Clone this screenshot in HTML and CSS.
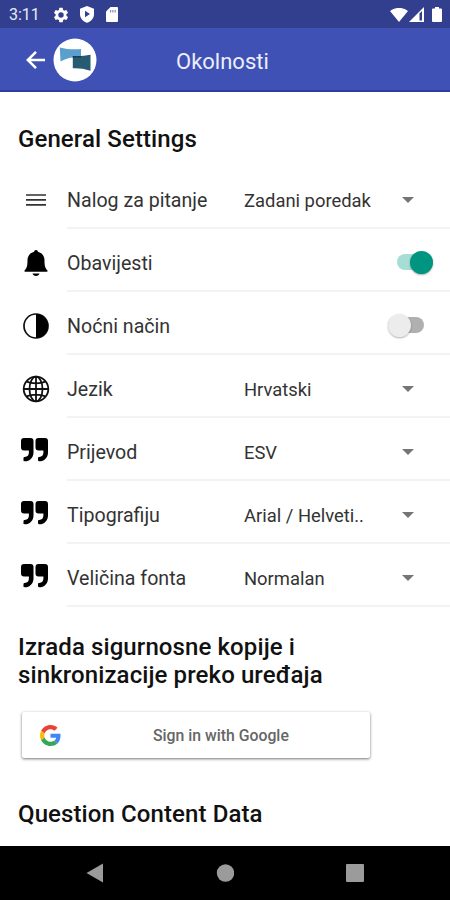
FILE: index.html
```
<!DOCTYPE html>
<html lang="hr">
<head>
  <meta charset="UTF-8">
  <meta name="viewport" content="width=device-width, initial-scale=1.0">
  <title>Okolnosti</title>
  <link rel="stylesheet" href="styles.css">
</head>
<body>
  <div class="status-bar">
    <span class="time">3:11</span>
    <svg class="status-gear" width="18" height="18" viewBox="0 0 24 24"><path fill="#fff" d="M19.14 12.94c.04-.3.06-.61.06-.94s-.02-.64-.07-.94l2.03-1.58a.49.49 0 0 0 .12-.61l-1.92-3.32a.49.49 0 0 0-.59-.22l-2.39.96c-.5-.38-1.03-.7-1.62-.94l-.36-2.54a.48.48 0 0 0-.48-.41h-3.84a.47.47 0 0 0-.47.41l-.36 2.54c-.59.24-1.13.57-1.62.94l-2.39-.96a.48.48 0 0 0-.59.22L2.74 8.87c-.12.21-.08.47.12.61l2.03 1.58c-.05.3-.09.63-.09.94s.02.64.07.94l-2.03 1.58a.49.49 0 0 0-.12.61l1.92 3.32c.12.22.37.29.59.22l2.39-.96c.5.38 1.03.7 1.62.94l.36 2.54c.05.24.24.41.48.41h3.84c.24 0 .44-.17.47-.41l.36-2.54c.59-.24 1.13-.56 1.62-.94l2.39.96c.22.08.47 0 .59-.22l1.92-3.32a.47.47 0 0 0-.12-.61zM12 15.6A3.6 3.6 0 1 1 12 8.4a3.6 3.6 0 0 1 0 7.2z"/></svg>
    <svg class="status-shield" width="14" height="17" viewBox="0 0 14 17"><path fill="#fff" d="M7 0l7 2.7v5.2c0 4-2.8 7.5-7 8.9-4.200-1.400-7-4.900-7-8.900V2.700z"/><path fill="#303f8f" d="M5 4.700v6.600l5-3.300z"/></svg>
    <svg class="status-card" width="12" height="15" viewBox="0 0 12 15"><path fill="#fff" d="M4.500 0H11a1 1 0 0 1 1 1v13a1 1 0 0 1-1 1H1a1 1 0 0 1-1-1V4.500z"/><path fill="#303f8f" d="M4 3h1.200v2.500H4zM6.300 3h1.200v2.500H6.300zM8.600 3h1.200v2.500H8.600z" opacity=".6"/></svg>
    <svg class="status-wifi" width="18" height="14" viewBox="0 0 18 14"><path fill="#fff" d="M9 14L0 3a14.500 14.500 0 0 1 18 0z"/></svg>
    <svg class="status-signal" width="15" height="15" viewBox="0 0 15 15"><path fill="#fff" d="M15 0v15H0z"/><path fill="#303f8f" d="M10.500 6.500L13 4v9.500h-2.500z"/></svg>
    <svg class="status-battery" width="10" height="15" viewBox="0 0 10 15"><path fill="#fff" d="M3 0h4v1.500h2a1 1 0 0 1 1 1V14a1 1 0 0 1-1 1H1a1 1 0 0 1-1-1V2.500a1 1 0 0 1 1-1h2z"/></svg>
  </div>

  <header class="app-bar">
    <svg class="back" width="20" height="20" viewBox="0 0 20 20" fill="none" stroke="#fff" stroke-width="2.500"><path d="M19 10H2.500M10 1.800L1.800 10l8.200 8.200"/></svg>
    <svg class="logo" width="44" height="44" viewBox="0 0 44 44">
      <circle cx="22" cy="22" r="21.500" fill="#fff"/>
      <path fill="#5b9fce" d="M6.800 9.500c7 1.800 14 2.300 21.200 1.500v8c-7-.5-14 .8-20.500 4.500z"/>
      <path fill="#265b72" d="M19.800 18c6 .3 12 0 17.700-1.200v16c-6-2.100-12-2.800-17.700-2.500z"/>
      <path fill="#173d50" d="M19.800 18c3 .2 5.700.2 8.200 0v1.700c-3-.2-5.500 0-8.200.3z"/>
    </svg>
    <h1>Okolnosti</h1>
  </header>

  <main>
    <h2 class="general">General Settings</h2>

    <div class="row">
      <div class="icon"><svg width="20" height="14" viewBox="0 0 20 14"><path stroke="#333" stroke-width="1.700" d="M0 2h20M0 6.900h20M0 11.800h20"/></svg></div>
      <div class="content"><span class="label">Nalog za pitanje</span><span class="value">Zadani poredak</span><i class="arrow"></i></div>
    </div>
    <div class="row">
      <div class="icon"><svg width="24" height="28" viewBox="0 0 24 28"><path d="M12 1c1.200 0 1.800.8 1.900 1.800C17.800 3.800 20.500 7 20.500 11c0 6 .6 8 2.800 10.200.6.700.4 1.600-.6 1.600H1.300c-1 0-1.200-.9-.6-1.600C2.900 19 3.500 17 3.500 11c0-4 2.700-7.200 6.600-8.200C10.200 1.800 10.800 1 12 1zM8.500 24.500h7c-.4 1.500-1.700 2.500-3.500 2.500s-3.100-1-3.500-2.500z"/></svg></div>
      <div class="content"><span class="label">Obavijesti</span><span class="switch on"></span></div>
    </div>
    <div class="row">
      <div class="icon"><svg width="28" height="28" viewBox="0 0 28 28"><circle cx="14" cy="14" r="12" fill="none" stroke="#111" stroke-width="1.700"/><path d="M14 2a12 12 0 0 1 0 24z"/></svg></div>
      <div class="content"><span class="label">Noćni način</span><span class="switch"></span></div>
    </div>
    <div class="row">
      <div class="icon"><svg width="28" height="28" viewBox="0 0 28 28" fill="none" stroke="#111" stroke-width="1.800"><circle cx="14" cy="14" r="12.300"/><ellipse cx="14" cy="14" rx="6.500" ry="12.300"/><path d="M14 1.700v24.600M1.700 14h24.600M4.500 6.700c5.500 2.300 13.500 2.300 19 0M4.500 21.300c5.500-2.300 13.500-2.300 19 0"/></svg></div>
      <div class="content"><span class="label">Jezik</span><span class="value">Hrvatski</span><i class="arrow"></i></div>
    </div>
    <div class="row">
      <div class="icon quote"><svg width="27" height="24" viewBox="0 0 27 24"><path d="M3 0h6.500a3 3 0 0 1 3 3v11.500c0 5.200-3.700 8.800-8.800 8.800-.9 0-1.200-.4-1.200-1.200v-2c0-.8.4-1.200 1.200-1.200 2.800 0 4.200-1.700 4.200-4.400V12.500H3a3 3 0 0 1-3-3V3a3 3 0 0 1 3-3z"/><path d="M17.500 0H24a3 3 0 0 1 3 3v11.500c0 5.200-3.700 8.800-8.800 8.800-.9 0-1.200-.4-1.200-1.200v-2c0-.8.4-1.200 1.200-1.200 2.800 0 4.200-1.700 4.200-4.400V12.500h-4.900a3 3 0 0 1-3-3V3a3 3 0 0 1 3-3z"/></svg></div>
      <div class="content"><span class="label">Prijevod</span><span class="value">ESV</span><i class="arrow"></i></div>
    </div>
    <div class="row">
      <div class="icon quote"><svg width="27" height="24" viewBox="0 0 27 24"><path d="M3 0h6.500a3 3 0 0 1 3 3v11.500c0 5.200-3.700 8.800-8.800 8.800-.9 0-1.200-.4-1.200-1.200v-2c0-.8.4-1.200 1.200-1.200 2.800 0 4.200-1.700 4.200-4.400V12.500H3a3 3 0 0 1-3-3V3a3 3 0 0 1 3-3z"/><path d="M17.500 0H24a3 3 0 0 1 3 3v11.500c0 5.200-3.700 8.800-8.800 8.800-.9 0-1.200-.4-1.200-1.200v-2c0-.8.4-1.200 1.200-1.200 2.800 0 4.200-1.700 4.200-4.400V12.500h-4.900a3 3 0 0 1-3-3V3a3 3 0 0 1 3-3z"/></svg></div>
      <div class="content"><span class="label">Tipografiju</span><span class="value">Arial / Helveti..</span><i class="arrow"></i></div>
    </div>
    <div class="row">
      <div class="icon quote"><svg width="27" height="24" viewBox="0 0 27 24"><path d="M3 0h6.500a3 3 0 0 1 3 3v11.500c0 5.200-3.700 8.800-8.800 8.800-.9 0-1.200-.4-1.200-1.200v-2c0-.8.4-1.200 1.200-1.200 2.800 0 4.200-1.700 4.200-4.400V12.500H3a3 3 0 0 1-3-3V3a3 3 0 0 1 3-3z"/><path d="M17.500 0H24a3 3 0 0 1 3 3v11.500c0 5.200-3.700 8.800-8.800 8.800-.9 0-1.200-.4-1.200-1.200v-2c0-.8.4-1.200 1.200-1.200 2.800 0 4.200-1.700 4.200-4.400V12.500h-4.900a3 3 0 0 1-3-3V3a3 3 0 0 1 3-3z"/></svg></div>
      <div class="content"><span class="label">Veličina fonta</span><span class="value">Normalan</span><i class="arrow"></i></div>
    </div>

    <h2 class="backup">Izrada sigurnosne kopije i<br>sinkronizacije preko uređaja</h2>

    <button class="google">
      <svg width="21" height="21" viewBox="0 0 48 48">
        <path fill="#ea4335" d="M24 9.500c3.540 0 6.710 1.220 9.210 3.600l6.850-6.850C35.900 2.380 30.470 0 24 0 14.620 0 6.510 5.380 2.560 13.220l7.980 6.190C12.430 13.720 17.740 9.500 24 9.500z"/>
        <path fill="#4285f4" d="M46.980 24.550c0-1.570-.15-3.090-.38-4.550H24v9.020h12.940c-.58 2.960-2.260 5.480-4.780 7.180l7.730 6c4.510-4.180 7.090-10.360 7.090-17.650z"/>
        <path fill="#fbbc05" d="M10.530 28.590A14.500 14.500 0 0 1 9.770 24c0-1.600.27-3.140.76-4.590l-7.980-6.190A23.900 23.900 0 0 0 0 24c0 3.880.92 7.540 2.560 10.780z"/>
        <path fill="#34a853" d="M24 48c6.480 0 11.930-2.130 15.890-5.810l-7.730-6c-2.150 1.450-4.920 2.300-8.160 2.300-6.260 0-11.570-4.220-13.470-9.910l-7.980 6.190C6.510 42.620 14.620 48 24 48z"/>
      </svg>
      <span>Sign in with Google</span>
    </button>

    <h2 class="data">Question Content Data</h2>
  </main>

  <nav class="nav-bar">
    <svg width="18" height="20" viewBox="0 0 18 20"><path fill="#9b9b9b" d="M17 .5v19L.5 10z"/></svg>
    <svg width="18" height="20" viewBox="0 0 18 20"><circle cx="9.500" cy="10" r="8.700" fill="#9b9b9b"/></svg>
    <svg width="18" height="20" viewBox="0 0 18 20"><rect y="1" width="18" height="18" rx="1" fill="#9b9b9b"/></svg>
  </nav>
</body>
</html>
```
FILE: styles.css
```
* {
  box-sizing: border-box;
}

body {
  margin: 0;
  width: 450px;
  height: 900px;
  display: flex;
  flex-direction: column;
  overflow: hidden;
  font-family: Roboto, sans-serif;
  background-color: #fff;
  color: #111;
}

svg {
  display: block;
  flex: none;
}

.status-bar {
  height: 28px;
  flex: none;
  display: flex;
  align-items: center;
  padding: 1px 8px 0 9px;
  background-color: #323f8f;
  color: #e8eaf8;
}

.time {
  width: 43px;
  font-size: 16px;
}

.status-shield {
  margin-left: 10px;
}

.status-card {
  margin-left: 12px;
}

.status-wifi {
  margin-left: auto;
}

.status-signal {
  margin-left: 1px;
}

.status-battery {
  margin-left: 8px;
}

.app-bar {
  height: 64px;
  flex: none;
  display: flex;
  align-items: center;
  padding: 2px 0 0 26px;
  background-color: #3f51b5;
  border-bottom: 2px solid #303f9f;
}

.logo {
  margin-left: 7px;
}

h1 {
  margin: 3px 0 0 79px;
  font-size: 22px;
  font-weight: 400;
  color: #eceefa;
}

main {
  flex: 1;
}

h2 {
  margin: 0 18px;
  font-size: 24px;
  line-height: 28px;
  font-weight: 500;
  letter-spacing: 0.1px;
  color: #111;
}

.general {
  padding-top: 33px;
  margin-bottom: 13px;
}

.row {
  height: 63px;
  display: flex;
}

.icon {
  width: 67px;
  padding: 4px 0 0 4px;
  display: flex;
  align-items: center;
  justify-content: center;
}

.icon.quote {
  padding: 0 0 0 1px;
}

.content {
  flex: 1;
  display: flex;
  align-items: center;
  padding-top: 7px;
  border-bottom: 2px solid #f3f3f3;
  white-space: nowrap;
}

.label {
  width: 177px;
  font-size: 19.6px;
  color: #333;
}

.value {
  width: 158px;
  padding-top: 1px;
  font-size: 18.4px;
  color: #333;
}

.arrow {
  border: 6px solid transparent;
  border-top-color: #757575;
  border-bottom: 0;
}

/* Toggle switches */
.switch {
  width: 36px;
  height: 16px;
  margin: 0 26px 2px auto;
  display: flex;
  align-items: center;
  border-radius: 8px;
  background-color: #b0b0b0;
}

.switch::before {
  content: "";
  flex: none;
  width: 23px;
  height: 23px;
  border-radius: 50%;
  background-color: #ececec;
  box-shadow: 0 1px 2px rgba(0, 0, 0, 0.3);
}

.switch.on {
  margin-right: 17px;
  justify-content: flex-end;
  background-color: #a6ddd4;
}

.switch.on::before {
  background-color: #009580;
}

.backup {
  padding-top: 26px;
}

.google {
  width: 348px;
  height: 46px;
  margin: 23px 0 0 22px;
  padding: 0 0 0 18px;
  display: flex;
  align-items: center;
  border: 0;
  border-radius: 2px;
  background-color: #fff;
  box-shadow: 0 1px 3px rgba(0, 0, 0, 0.55);
  font-family: Roboto, sans-serif;
  font-size: 15.8px;
  font-weight: 500;
  color: #666;
}

.google span {
  margin-left: 92px;
}

.data {
  padding-top: 42px;
}

.nav-bar {
  height: 54px;
  flex: none;
  display: flex;
  justify-content: space-between;
  align-items: center;
  padding: 0 86px;
  background-color: #000;
}
```
